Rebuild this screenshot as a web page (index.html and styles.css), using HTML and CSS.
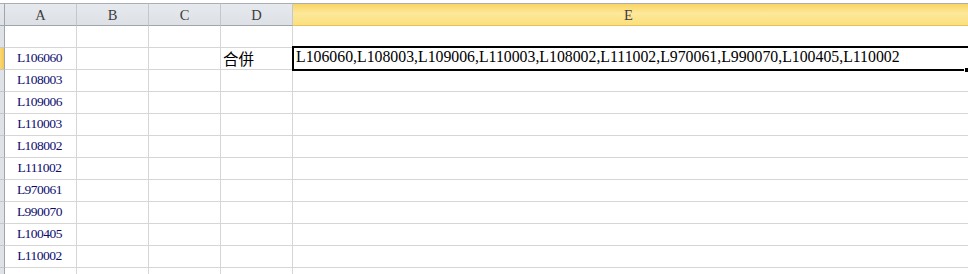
FILE: index.html
```html
<!DOCTYPE html>
<html>
<head>
<meta charset="utf-8">
<link rel="stylesheet" href="styles.css">
</head>
<body>
<div class="frame">
<div class="sheet">
  <div class="hd corner"></div>
  <div class="hd">A</div>
  <div class="hd">B</div>
  <div class="hd">C</div>
  <div class="hd">D</div>
  <div class="hd hd-sel">E</div>

  <div class="rh"></div><div class="c"></div><div class="c"></div><div class="c"></div><div class="c"></div><div class="c"></div>

  <div class="rh rh-sel"></div><div class="c a">L106060</div><div class="c"></div><div class="c"></div><div class="c cjk">合併</div><div class="c sel"><span class="etext">L106060,L108003,L109006,L110003,L108002,L111002,L970061,L990070,L100405,L110002</span><span class="handle"></span></div>

  <div class="rh"></div><div class="c a">L108003</div><div class="c"></div><div class="c"></div><div class="c"></div><div class="c"></div>
  <div class="rh"></div><div class="c a">L109006</div><div class="c"></div><div class="c"></div><div class="c"></div><div class="c"></div>
  <div class="rh"></div><div class="c a">L110003</div><div class="c"></div><div class="c"></div><div class="c"></div><div class="c"></div>
  <div class="rh"></div><div class="c a">L108002</div><div class="c"></div><div class="c"></div><div class="c"></div><div class="c"></div>
  <div class="rh"></div><div class="c a">L111002</div><div class="c"></div><div class="c"></div><div class="c"></div><div class="c"></div>
  <div class="rh"></div><div class="c a">L970061</div><div class="c"></div><div class="c"></div><div class="c"></div><div class="c"></div>
  <div class="rh"></div><div class="c a">L990070</div><div class="c"></div><div class="c"></div><div class="c"></div><div class="c"></div>
  <div class="rh"></div><div class="c a">L100405</div><div class="c"></div><div class="c"></div><div class="c"></div><div class="c"></div>
  <div class="rh"></div><div class="c a">L110002</div><div class="c"></div><div class="c"></div><div class="c"></div><div class="c"></div>
  <div class="rh"></div><div class="c"></div><div class="c"></div><div class="c"></div><div class="c"></div><div class="c"></div>
</div>
</div>
</body>
</html>
```
FILE: styles.css
```css
html, body {
  margin: 0;
  padding: 0;
  background: #ffffff;
}
.frame {
  width: 968px;
  height: 274px;
  overflow: hidden;
  padding-top: 3px;
  box-sizing: border-box;
}
.sheet {
  display: grid;
  grid-template-columns: 5px 72px 72px 72px 72px 760px;
  grid-template-rows: 23px repeat(12, 22px);
  width: 1053px;
}
.hd {
  box-sizing: border-box;
  border-top: 1px solid #a9aeb4;
  border-bottom: 1px solid #9ea5ad;
  border-right: 1px solid #c3c8cf;
  background: linear-gradient(#e6e9ed, #dde1e6);
  font-family: "Liberation Serif", serif;
  font-size: 14.5px;
  color: #3d3d3d;
  display: flex;
  align-items: center;
  justify-content: center;
  padding-top: 1px;
}
.corner {
  border-right: 1px solid #9ea5ad;
}
.hd-sel {
  background: linear-gradient(#f8d462, #fde89c 45%, #fbe07c);
  border-bottom: 1px solid #e6c15a;
  border-right: none;
  justify-content: flex-start;
  padding-left: 331px;
}
.rh {
  box-sizing: border-box;
  border-right: 1px solid #9ea5ad;
  border-bottom: 1px solid #c3c8cf;
  background: #dfe3e8;
}
.rh-sel {
  background: linear-gradient(90deg, #f9d877, #f6c84f);
}
.c {
  box-sizing: border-box;
  border-right: 1px solid #d6d6d6;
  border-bottom: 1px solid #d6d6d6;
  display: flex;
  align-items: flex-end;
  padding-bottom: 3px;
  white-space: nowrap;
}
.a {
  justify-content: center;
  font-family: "Liberation Serif", serif;
  font-size: 13.5px;
  letter-spacing: -0.5px;
  color: #0c0c6e;
  padding-bottom: 3px;
  padding-right: 2px;
}
.cjk {
  font-family: "Noto Sans CJK TC", "Noto Sans CJK SC", sans-serif;
  font-size: 15.5px;
  line-height: 18px;
  color: #000;
  padding-left: 2px;
  padding-bottom: 2px;
}
.sel {
  position: relative;
  border-right: none;
}
.sel::after {
  content: "";
  position: absolute;
  left: -1px;
  top: -2px;
  right: 0;
  bottom: -2px;
  border: 2px solid #000;
  border-right: none;
  pointer-events: none;
}
.etext {
  font-family: "Liberation Serif", serif;
  font-size: 15.8px;
  line-height: 16px;
  color: #000;
  padding-left: 3px;
  padding-bottom: 1px;
}
.handle {
  position: absolute;
  left: 672px;
  bottom: -3px;
  width: 4px;
  height: 4px;
  background: #000;
  outline: 1px solid #fff;
  z-index: 2;
}
```
